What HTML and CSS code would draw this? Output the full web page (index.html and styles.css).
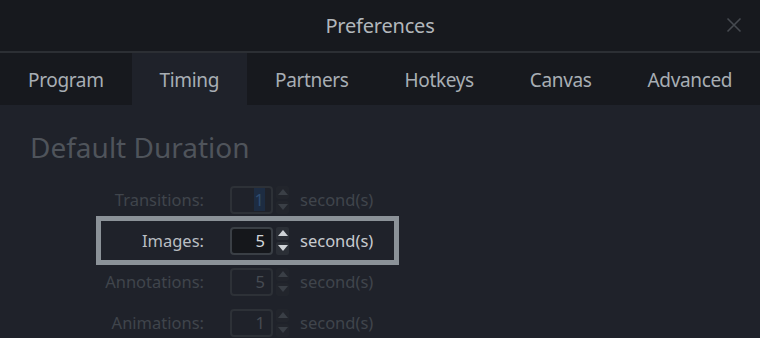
FILE: index.html
```html
<!DOCTYPE html>
<html>
<head>
<meta charset="utf-8">
<link rel="stylesheet" href="styles.css">
</head>
<body>
<div class="window">
  <header class="titlebar">
    <span class="title">Preferences</span>
    <span class="close" aria-label="Close">
      <svg width="16" height="16" viewBox="0 0 16 16"><path d="M1.5 1.5 L14.5 14.5 M14.5 1.5 L1.5 14.5" stroke="#464a50" stroke-width="1.6" fill="none"/></svg>
    </span>
  </header>
  <nav class="tabs">
    <span class="tab">Program</span>
    <span class="tab active">Timing</span>
    <span class="tab">Partners</span>
    <span class="tab">Hotkeys</span>
    <span class="tab">Canvas</span>
    <span class="tab">Advanced</span>
  </nav>
  <main class="content">
    <h1 class="heading">Default Duration</h1>
    <div class="rows">
      <div class="row disabled">
        <span class="label">Transitions:</span>
        <span class="input"><span class="sel">1</span></span>
        <span class="spin"><span class="btn up"></span><span class="btn down"></span></span>
        <span class="unit">second(s)</span>
      </div>
      <div class="row focus">
        <span class="label">Images:</span>
        <span class="input">5</span>
        <span class="spin"><span class="btn up"></span><span class="btn down"></span></span>
        <span class="unit">second(s)</span>
      </div>
      <div class="row disabled">
        <span class="label">Annotations:</span>
        <span class="input">5</span>
        <span class="spin"><span class="btn up"></span><span class="btn down"></span></span>
        <span class="unit">second(s)</span>
      </div>
      <div class="row disabled">
        <span class="label">Animations:</span>
        <span class="input">1</span>
        <span class="spin"><span class="btn up"></span><span class="btn down"></span></span>
        <span class="unit">second(s)</span>
      </div>
    </div>
  </main>
</div>
</body>
</html>
```
FILE: styles.css
```css
* { box-sizing: border-box; }
html, body { margin: 0; padding: 0; }
body {
  width: 760px;
  height: 338px;
  overflow: hidden;
  background: #1f222a;
  font-family: "Noto Sans", "Open Sans", sans-serif;
}
.window { display: flex; flex-direction: column; height: 338px; }
.titlebar {
  flex-shrink: 0;
  position: relative;
  height: 53px;
  background: #17191e;
  border-bottom: 2px solid #2c2f34;
  display: flex;
  align-items: center;
  justify-content: center;
}
.title { color: #b2b7bc; font-size: 20px; letter-spacing: -0.2px; }
.close {
  position: absolute;
  right: 18px;
  top: 17px;
  width: 16px;
  height: 16px;
  display: flex;
}
.tabs {
  flex-shrink: 0;
  display: flex;
  height: 52px;
  background: #17191e;
}
.tab {
  display: flex;
  align-items: center;
  padding: 2px 28px 0;
  color: #a8aeb4;
  font-size: 19px;
  letter-spacing: -0.35px;
}
.tab.active { background: #1f222a; }
.content { flex: 1; min-height: 0; background: #1f222a; }
.heading {
  margin: 0;
  padding: 24px 0 0 30px;
  height: 74px;
  font-weight: 400;
  font-size: 28px;
  color: #4f545b;
  line-height: 36px;
}
.rows { display: flex; flex-direction: column; }
.row {
  flex-shrink: 0;
  display: flex;
  align-items: center;
  height: 41px;
  margin-left: 100px;
  width: 295px;
  font-size: 16.5px;
}
.label { width: 104px; text-align: right; white-space: nowrap; margin-right: 26px; }
.input {
  width: 43px;
  height: 28px;
  border: 2px solid #2c3036;
  border-radius: 4px;
  display: flex;
  align-items: center;
  justify-content: flex-end;
  padding-right: 6px;
  font-size: 16.5px;
}
.spin { display: flex; flex-direction: column; gap: 2px; margin-left: 3px; margin-right: 11px; }
.btn { width: 13px; height: 13px; display: flex; align-items: center; justify-content: center; border-radius: 2px; }
.btn::after { content: ""; width: 0; height: 0; border-left: 5px solid transparent; border-right: 5px solid transparent; }
.up::after { border-bottom: 6px solid currentColor; }
.down::after { border-top: 6px solid currentColor; }
.unit { white-space: nowrap; }

.disabled .label, .disabled .unit { color: #40454c; }
.disabled .input { color: #464b52; background: transparent; border-color: #2d3137; }
.disabled .btn { background: #22252c; color: #3a3f46; }
.sel { background: #1d2c42; color: #2f4c70; padding: 0 1px; }

.focus { outline: 5px solid #8b9298; outline-offset: -1px; }
.focus .label { color: #b9bec3; }
.focus .unit { color: #c7cbcf; }
.focus .input { background: #15171b; border-color: #3a3f45; color: #d2d6da; }
.focus .btn { background: #2b2f36; color: #cfd3d7; }
```
